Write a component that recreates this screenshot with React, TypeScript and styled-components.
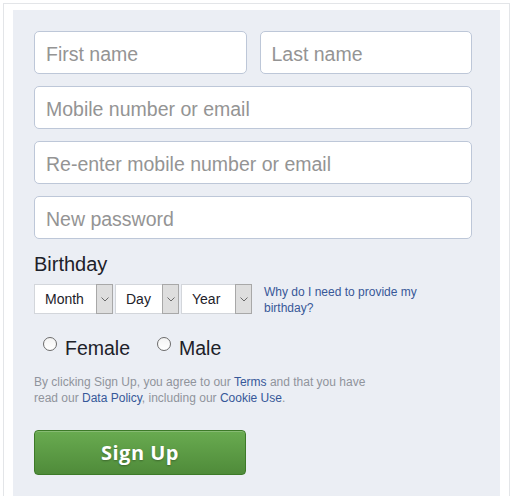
import styled, { createGlobalStyle } from 'styled-components';

const GlobalStyle = createGlobalStyle`
    body {
        margin: 0;
        background: #ffffff;
        font-family: "Liberation Sans", Arial, sans-serif;
    }
    * { box-sizing: border-box; }
`;

const Frame = styled.div`
    margin: 3px 0 0 3px;
    width: 507px;
    border: 1px solid #e3e5e8;
    padding: 6px 9px 0 9px;
`;

const Panel = styled.form`
    background-color: #ebeef4;
    min-height: 500px;
    padding: 21px 28px 20px 21px;
    display: flex;
    flex-direction: column;
`;

const Fields = styled.div`
    display: flex;
    flex-direction: column;
    gap: 12px;
`;

const NameRow = styled.div`
    display: grid;
    grid-template-columns: 1fr 1fr;
    gap: 13px;
`;

const TextInput = styled.input`
    height: 43px;
    width: 100%;
    border: 1px solid #bdc7d8;
    border-radius: 5px;
    background: #ffffff;
    padding: 3px 11px 0 11px;
    font-family: "Liberation Sans", Arial, sans-serif;
    font-size: 19.5px;
    color: #1d2129;
    outline: none;
    &::placeholder {
        color: #949494;
    }
`;

const Label = styled.div`
    margin-top: 14px;
    font-size: 20px;
    line-height: 23px;
    color: #1d2129;
`;

const BirthdayRow = styled.div`
    margin-top: 8px;
    display: flex;
    align-items: flex-start;
`;

const Selects = styled.div`
    display: flex;
    gap: 2px;
`;

const SelectBox = styled.div<{ $width: number }>`
    width: ${p => p.$width}px;
    height: 30px;
    display: flex;
    background: #ffffff;
    border: 1px solid #d3d6db;
`;

const SelectText = styled.span`
    flex: 1;
    display: flex;
    align-items: center;
    padding-left: 10px;
    font-size: 14px;
    color: #1d2129;
`;

const ArrowBox = styled.span`
    width: 17px;
    margin: -1px -1px -1px 0;
    display: flex;
    align-items: center;
    justify-content: center;
    background: #dedede;
    border: 1px solid #a8a8a8;
`;

const HelpLink = styled.a`
    margin-left: 12px;
    width: 165px;
    font-size: 12px;
    line-height: 16px;
    color: #385898;
    text-decoration: none;
`;

const GenderRow = styled.div`
    margin-top: 21px;
    padding-left: 9px;
    display: flex;
    gap: 27px;
`;

const RadioLabel = styled.label`
    display: flex;
    gap: 8px;
    font-size: 19.5px;
    line-height: 23px;
    color: #1d2129;
`;

const RadioCircle = styled.span`
    width: 14px;
    height: 14px;
    border-radius: 50%;
    border: 1px solid #6b6b6b;
    background: linear-gradient(#f4f4f4, #ffffff);
`;

const Terms = styled.p`
    margin: 14px 0 0 0;
    max-width: 335px;
    font-size: 12px;
    line-height: 16px;
    color: #90949c;
`;

const TermsLink = styled.a`
    color: #365899;
    text-decoration: none;
`;

const SignUpButton = styled.button`
    margin-top: 24px;
    width: 212px;
    height: 45px;
    border: 1px solid #3d7a28;
    border-radius: 4px;
    background: linear-gradient(#69ab50, #4f8b3a);
    box-shadow: inset 0 1px 0 rgba(255, 255, 255, 0.2);
    color: #ffffff;
    font-family: "Open Sans", "Liberation Sans", sans-serif;
    font-weight: 700;
    font-size: 20px;
    letter-spacing: 0.5px;
    text-shadow: 0 1px 2px rgba(0, 0, 0, 0.3);
    display: flex;
    align-items: center;
    justify-content: center;
`;

function Chevron() {
    return (
        <svg width="8" height="5" viewBox="0 0 8 5">
            <path d="M0.5 0.5 L4 4 L7.5 0.5" fill="none" stroke="#6a6a6a" strokeWidth="1" />
        </svg>
    );
}

function Select(props: { label: string, width: number }) {
    return (
        <SelectBox $width={props.width}>
            <SelectText>{props.label}</SelectText>
            <ArrowBox><Chevron /></ArrowBox>
        </SelectBox>
    );
}

export default function App() {
    return (
        <>
            <GlobalStyle />
            <Frame>
                <Panel onSubmit={e => e.preventDefault()}>
                    <Fields>
                        <NameRow>
                            <TextInput placeholder="First name" />
                            <TextInput placeholder="Last name" />
                        </NameRow>
                        <TextInput placeholder="Mobile number or email" />
                        <TextInput placeholder="Re-enter mobile number or email" />
                        <TextInput type="password" placeholder="New password" />
                    </Fields>
                    <Label>Birthday</Label>
                    <BirthdayRow>
                        <Selects>
                            <Select label="Month" width={79} />
                            <Select label="Day" width={64} />
                            <Select label="Year" width={71} />
                        </Selects>
                        <HelpLink href="#">Why do I need to provide my birthday?</HelpLink>
                    </BirthdayRow>
                    <GenderRow>
                        <RadioLabel><RadioCircle />Female</RadioLabel>
                        <RadioLabel><RadioCircle />Male</RadioLabel>
                    </GenderRow>
                    <Terms>
                        By clicking Sign Up, you agree to our <TermsLink href="#">Terms</TermsLink> and that you have
                        read our <TermsLink href="#">Data Policy</TermsLink>, including our <TermsLink href="#">Cookie Use</TermsLink>.
                    </Terms>
                    <SignUpButton type="submit">Sign Up</SignUpButton>
                </Panel>
            </Frame>
        </>
    );
}
